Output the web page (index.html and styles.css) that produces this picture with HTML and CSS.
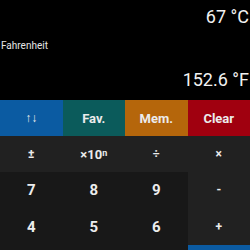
FILE: index.html
```html
<!DOCTYPE html>
<html lang="en">
<head>
    <meta charset="UTF-8">
    <meta name="viewport" content="width=device-width, initial-scale=1.0">
    <title>Temperature converter</title>
    <link rel="stylesheet" href="styles.css">
</head>
<body>
    <!-- display -->
    <div class="display">
        <div class="value value-top">67 °C</div>
        <div class="unit-label">Fahrenheit</div>
        <div class="value value-bottom">152.6 °F</div>
    </div>

    <!-- keypad -->
    <div class="keys">
        <button class="key key-swap">↑↓</button>
        <button class="key key-fav">Fav.</button>
        <button class="key key-mem">Mem.</button>
        <button class="key key-clear">Clear</button>

        <button class="key key-op">±</button>
        <button class="key key-op key-exp">×10<sup>n</sup></button>
        <button class="key key-op">÷</button>
        <button class="key key-op">×</button>

        <button class="key key-num">7</button>
        <button class="key key-num">8</button>
        <button class="key key-num">9</button>
        <button class="key key-side">-</button>

        <button class="key key-num">4</button>
        <button class="key key-num">5</button>
        <button class="key key-num">6</button>
        <button class="key key-side">+</button>

        <!-- next row, only its top edge is on screen -->
        <div class="key key-num"></div>
        <div class="key key-num"></div>
        <div class="key key-num"></div>
        <div class="key key-equals"></div>
    </div>
</body>
</html>
```

FILE: styles.css
```css
/* page */
body {
    margin: 0;
    width: 250px;
    height: 250px;
    overflow: hidden;
    background-color: #000;
    color: #f2f2f2;
    font-family: Roboto, "Liberation Sans", sans-serif;
}

/* display area */
.display {
    height: 100px;
    box-sizing: border-box;
    padding: 6px 1px 0 1px;
    display: flex;
    flex-direction: column;
}

.value {
    text-align: right;
    font-size: 18px;
    line-height: 21px;
}

.unit-label {
    margin-top: 13px;
    font-size: 10px;
    line-height: 12px;
    color: #e6e6e6;
}

.value-bottom {
    margin-top: 17px;
}

/* keypad */
.keys {
    display: grid;
    grid-template-columns: repeat(4, 1fr);
    grid-template-rows: 36px 36px 36.5px 36.5px 36px;
}

.key {
    border: none;
    margin: 0;
    padding: 0;
    display: flex;
    align-items: center;
    justify-content: center;
    font-family: Roboto, "Liberation Sans", sans-serif;
    font-weight: bold;
    font-size: 13px;
    color: #ececec;
    background-color: #181818;
}

.key sup {
    font-size: 9px;
    line-height: 0;
    position: relative;
    top: -1px;
}

.key-swap {
    background-color: #0b5ba2;
    font-weight: normal;
    font-size: 12px;
}

.key-fav {
    background-color: #0b5b5b;
}

.key-mem {
    background-color: #b5660b;
}

.key-clear {
    background-color: #a0000f;
}

.key-op {
    background-color: #212121;
    font-size: 12px;
}

.key-exp {
    font-size: 13px;
}

.key-num {
    font-size: 15px;
}

.key-side {
    background-color: #212121;
    font-size: 12px;
}

.key-equals {
    background-color: #0b5ba2;
}
```
